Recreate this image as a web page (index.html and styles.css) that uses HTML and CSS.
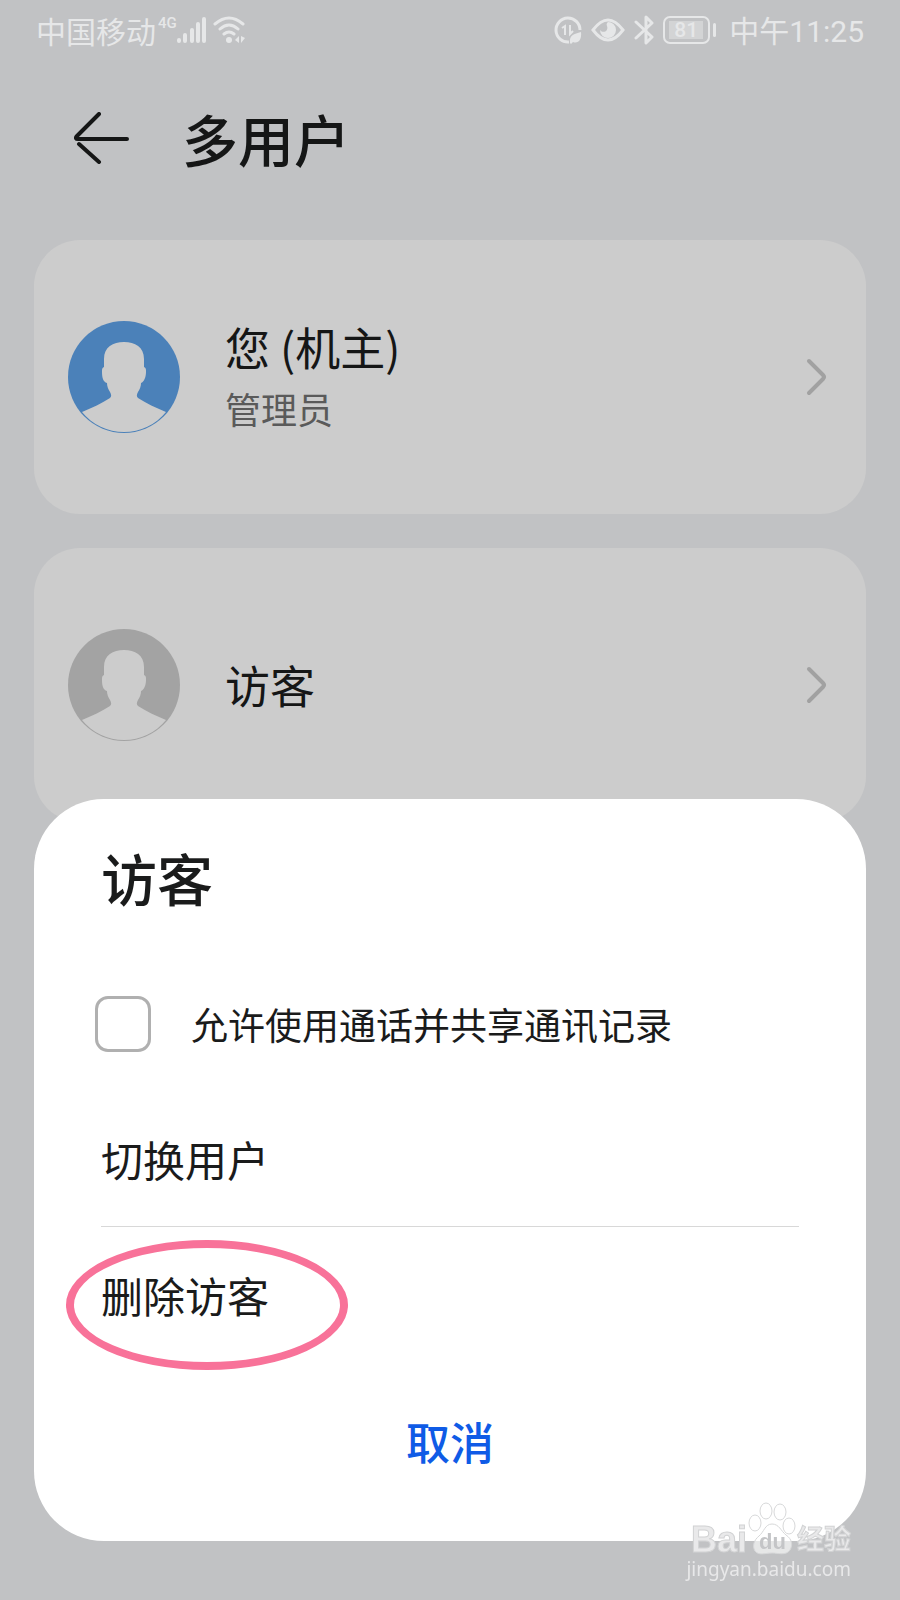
FILE: index.html
```
<!DOCTYPE html>
<html lang="zh-CN">
<head>
    <meta charset="UTF-8">
    <meta name="viewport" content="width=device-width, initial-scale=1.0">
    <title>多用户</title>
    <link rel="stylesheet" href="styles.css">
</head>
<body>
    <!-- 头像图形，两个用户共用 -->
    <svg class="symbols" aria-hidden="true">
        <symbol id="avatar" viewBox="0 0 112 112">
            <circle cx="56" cy="56" r="56" fill="currentColor"/>
            <path class="person" d="M14 91C24 87 34 82 42 77C44 75 43 73 42 71C40 68 39 65 39 62C35 61 34 56 34 51C34 48 34 47 36 46V38C36 26 45 21 56 21C67 21 76 26 76 38V46C78 47 78 48 78 51C78 56 76 61 73 62C73 65 72 68 70 71C69 73 68 75 70 77C78 82 88 87 98 91A54 54 0 0 1 14 91Z"/>
        </symbol>
    </svg>
    <header class="status">
        <div class="status-left">
            <span class="carrier">中国移动</span>
            <span class="net">4G</span>
            <svg width="30" height="28" viewBox="0 0 30 28" fill="none" stroke="currentColor" stroke-width="4" stroke-linecap="round">
                <path d="M2 24v1M8 19v6M15 14v11M21 8v17M27 3v22"/>
            </svg>
            <svg class="wifi" width="34" height="28" viewBox="0 0 34 28" fill="none" stroke="currentColor" stroke-width="3" stroke-linecap="round">
                <path d="M2 8Q16-4 30 8M7 13Q16 5 25 13M11 18Q16 14 21 18"/>
                <circle cx="16" cy="24" r="3" fill="currentColor" stroke="none"/>
                <path d="M26 20v7l-4-3zM28 20v7l4-5z" fill="currentColor" stroke="none"/>
            </svg>
        </div>
        <div class="status-right">
            <svg width="28" height="28" viewBox="0 0 28 28" fill="none" stroke="currentColor" stroke-width="3">
                <path d="M15 26A12 12 0 1 1 26 14"/>
                <path d="M8 12l3-2v9M16 9v9l3-3" stroke-width="2"/>
                <path d="M16 27c-1-8 4-9 11-11c1 8-3 12-8 10l-2 2z" fill="currentColor" stroke="none"/>
            </svg>
            <svg width="34" height="24" viewBox="0 0 34 24" fill="none" stroke="currentColor" stroke-width="3">
                <path d="M2 12Q17-8 32 12Q17 32 2 12Z"/>
                <path d="M17 4a8 8 0 1 1-8 8c3 4 9 1 7-4c-1-2 0-3 1-4z" fill="currentColor" stroke="none"/>
            </svg>
            <svg width="20" height="30" viewBox="0 0 20 30" fill="none" stroke="currentColor" stroke-width="3" stroke-linejoin="round" stroke-linecap="round">
                <path d="M2 7l16 15l-6 6V2l6 6L2 23"/>
            </svg>
            <span class="battery"><span class="level">81</span></span>
            <span class="time">中午11:25</span>
        </div>
    </header>

    <div class="topbar">
        <button class="back" type="button" aria-label="返回">
            <svg width="56" height="52" viewBox="0 0 56 52" fill="none" stroke="currentColor" stroke-width="4" stroke-linecap="round" stroke-linejoin="round">
                <path d="M25 2L3 24C1 26 2 27 4 27H53"/>
                <path d="M5 32L25 50"/>
            </svg>
        </button>
        <h1>多用户</h1>
    </div>

    <main class="users">
        <button class="card" type="button">
            <svg class="avatar owner" width="112" height="112"><use href="#avatar"/></svg>
            <span class="info">
                <span class="name">您 (机主)</span>
                <span class="role">管理员</span>
            </span>
            <svg class="arrow" width="22" height="38" viewBox="0 0 22 38"><path d="M3 3l14 14q2 2 0 4L3 35"/></svg>
        </button>
        <button class="card" type="button">
            <svg class="avatar guest" width="112" height="112"><use href="#avatar"/></svg>
            <span class="info">
                <span class="name">访客</span>
            </span>
            <svg class="arrow" width="22" height="38" viewBox="0 0 22 38"><path d="M3 3l14 14q2 2 0 4L3 35"/></svg>
        </button>
    </main>

    <!-- 底部弹窗 -->
    <section class="sheet" role="dialog" aria-labelledby="sheetTitle">
        <h2 id="sheetTitle">访客</h2>
        <label class="allow" for="allowCall">
            <input type="checkbox" id="allowCall">
            <span>允许使用通话并共享通讯记录</span>
        </label>
        <button class="option" type="button">切换用户</button>
        <button class="option remove" type="button">删除访客</button>
        <button class="cancel" type="button">取消</button>
    </section>

    <!-- 水印 -->
    <div class="watermark">
        <div class="logo">
            <span class="bai">Bai</span>
            <svg width="50" height="54" viewBox="0 0 50 54">
                <g class="paw">
                    <ellipse cx="8" cy="21" rx="6" ry="8"/>
                    <ellipse cx="19" cy="9" rx="6" ry="8"/>
                    <ellipse cx="33" cy="10" rx="6" ry="8"/>
                    <ellipse cx="42" cy="24" rx="6" ry="8"/>
                    <path d="M25 22C32 22 34 29 39 33C45 37 46 43 43 48C39 54 31 51 25 51C18 51 12 54 8 49C5 44 7 38 12 34C17 30 18 22 25 22Z"/>
                </g>
                <text class="du" x="12" y="47">du</text>
            </svg>
            <span class="exp">经验</span>
        </div>
        <div class="site">jingyan.baidu.com</div>
    </div>
</body>
</html>
```

FILE: styles.css
```
*,
*::before,
*::after{
    margin: 0;
    padding: 0;
    box-sizing: border-box;
}
body{
    min-height: 100vh;
    background-color: #c1c2c4;
    color: #151616;
    font-family: "Noto Sans CJK SC", "Noto Sans", sans-serif;
}
button{
    border: none;
    background: none;
    color: inherit;
    font-family: inherit;
    text-align: left;
    cursor: pointer;
}
svg{
    flex: none;
}
.symbols{
    position: absolute;
    width: 0;
    height: 0;
}
/* 状态栏 */
.status{
    display: flex;
    justify-content: space-between;
    height: 60px;
    padding: 0 36px;
    color: #e6e7e8;
    font-size: 30px;
    line-height: 60px;
}
.status-left,
.status-right{
    display: flex;
    align-items: center;
}
.status-right{
    gap: 9px;
}
.time{
    padding-top: 4px;
    font-family: Roboto, "Noto Sans CJK SC", sans-serif;
}
.net{
    align-self: flex-start;
    margin-left: 2px;
    font-family: Roboto, sans-serif;
    font-size: 15px;
    font-weight: 500;
    line-height: 46px;
}
.wifi{
    margin-left: 6px;
}
.battery{
    position: relative;
    width: 47px;
    height: 28px;
    margin-right: 10px;
    padding: 3px 4px;
    border: 2px solid currentColor;
    border-radius: 7px;
}
.battery::after{
    content: "";
    position: absolute;
    top: 5px;
    right: -8px;
    width: 3px;
    height: 14px;
    border-radius: 2px;
    background-color: currentColor;
}
.level{
    display: block;
    width: 34px;
    height: 18px;
    background-color: #d3d4d5;
    font-family: Roboto, sans-serif;
    font-size: 21px;
    font-weight: 500;
    line-height: 18px;
    text-align: center;
}
/* 标题栏 */
.topbar{
    display: flex;
    align-items: center;
    gap: 52px;
    height: 180px;
    padding: 0 74px 24px;
}
.back svg{
    display: block;
}
.topbar h1,
.sheet h2{
    font-size: 56px;
    font-weight: 500;
    line-height: 80px;
}
/* 用户列表 */
.users{
    display: flex;
    flex-direction: column;
    gap: 34px;
    padding: 0 34px;
}
.card{
    display: flex;
    align-items: center;
    gap: 45px;
    min-height: 274px;
    padding: 0 38px 0 34px;
    border-radius: 46px;
    background-color: #ccc;
}
.owner{
    color: #4b81b9;
}
.guest{
    color: #a3a3a3;
}
.person{
    fill: #ccc;
}
.info{
    display: flex;
    flex: 1;
    flex-direction: column;
}
.name{
    font-size: 45px;
    line-height: 62px;
}
.role{
    color: #5a5a5a;
    font-size: 36px;
    line-height: 60px;
}
.arrow{
    fill: none;
    stroke: #a1a1a1;
    stroke-width: 4;
    stroke-linecap: round;
}
/* 底部弹窗 */
.sheet{
    position: fixed;
    right: 34px;
    bottom: 59px;
    left: 34px;
    display: flex;
    flex-direction: column;
    padding: 38px 67px 51px;
    border-radius: 70px;
    background-color: #fff;
    color: #1a1b1b;
}
.allow{
    display: flex;
    align-items: center;
    gap: 40px;
    height: 80px;
    margin: 67px 0 26px -6px;
    font-size: 37px;
}
.allow input{
    flex: none;
    width: 56px;
    height: 56px;
    border: 3px solid #b0b0b0;
    border-radius: 13px;
    appearance: none;
}
.allow input:checked{
    background-color: #0a59f7;
}
.option{
    height: 136px;
    font-size: 42px;
}
.remove{
    position: relative;
    border-top: 1px solid #d8d8d8;
}
/* 粉色圈，标出删除项 */
.remove::after{
    content: "";
    position: absolute;
    top: 13px;
    left: -35px;
    width: 282px;
    height: 130px;
    border: 8px solid #f87299;
    border-radius: 50%;
    pointer-events: none;
}
.cancel{
    height: 98px;
    margin-top: 30px;
    color: #0f5be6;
    font-size: 44px;
    font-weight: 500;
    text-align: center;
}
/* 水印 */
.watermark{
    position: fixed;
    right: 49px;
    bottom: 18px;
    color: #e8e8e9;
}
.logo{
    display: flex;
    align-items: flex-end;
    justify-content: flex-end;
}
.bai,
.exp{
    color: #e9e9ea;
    font-weight: 700;
    -webkit-text-stroke: 1px #d2d3d4;
}
.bai{
    font-family: "Liberation Sans", sans-serif;
    font-size: 36px;
    line-height: 32px;
}
.exp{
    font-size: 27px;
    line-height: 36px;
}
.paw{
    fill: #fff;
    fill-opacity: 0.6;
    stroke: #d6d7d8;
}
.du{
    fill: #c4c5c7;
    font-family: "Liberation Sans", sans-serif;
    font-size: 22px;
    font-weight: 700;
}
.site{
    font-family: "Noto Sans", sans-serif;
    font-size: 19px;
    line-height: 26px;
    text-align: right;
}
```
